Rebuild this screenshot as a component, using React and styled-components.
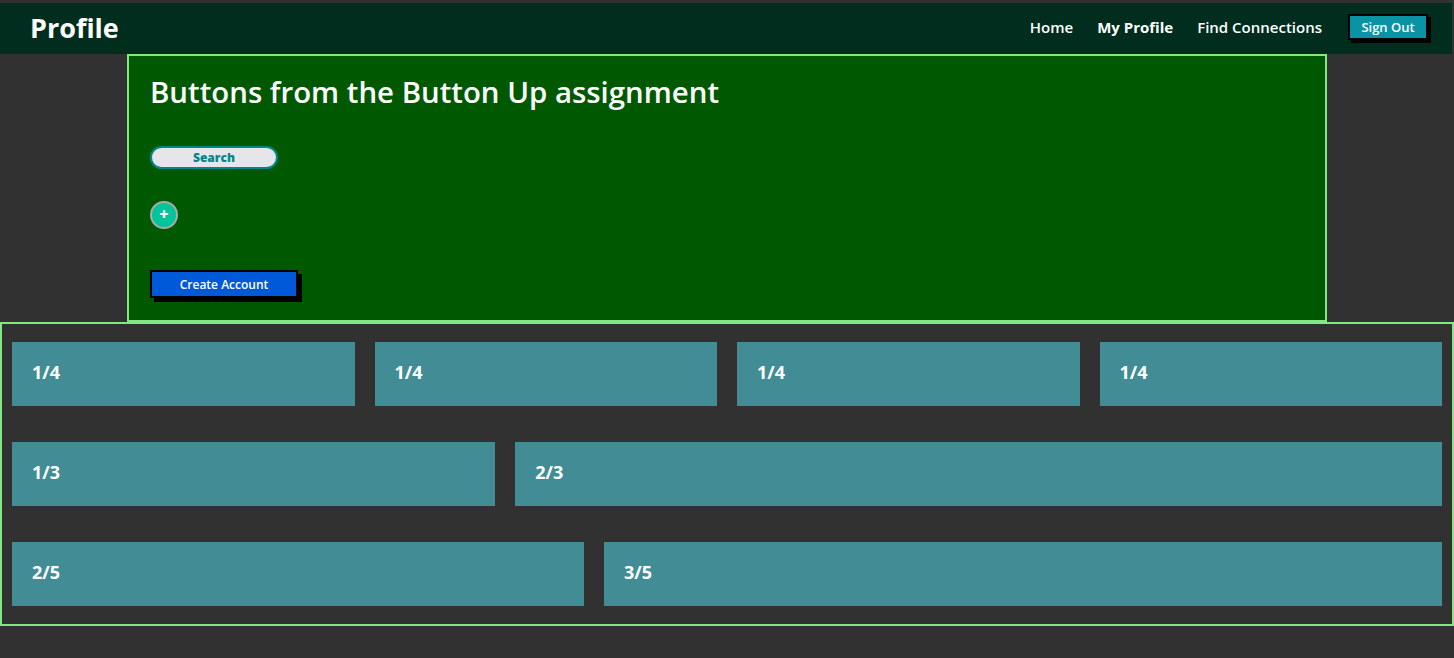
import styled, { createGlobalStyle } from "styled-components";

const GlobalStyle = createGlobalStyle`
  * { box-sizing: border-box; }
  body {
    margin: 0;
    background: #313131;
    font-family: "Open Sans", "Noto Sans", sans-serif;
    color: #fff;
  }
`;

const Page = styled.div`
  padding-top: 3px;
  min-height: 658px;
`;

const Nav = styled.nav`
  height: 51px;
  width: 1452px;
  background: #002d1e;
  display: flex;
  align-items: center;
  padding: 0 24px 0 30px;
`;

const Brand = styled.h1`
  margin: 0 0 2px;
  font-size: 27px;
  font-weight: 700;
  flex: 1;
`;

const NavLinks = styled.div`
  display: flex;
  align-items: center;
  gap: 24px;
`;

const NavLink = styled.a`
  font-size: 15px;
  font-weight: ${(p) => (p.$active ? 700 : 600)};
  color: #fff;
  text-decoration: none;
  margin-bottom: 3px;
`;

const SignOut = styled.button`
  font-family: inherit;
  font-size: 13px;
  font-weight: 600;
  color: #fff;
  background: #0a93a5;
  border: 2px solid #000;
  box-shadow: 3px 3px 0 #000;
  width: 80px;
  height: 26px;
  margin: 0 0 3px 2px;
`;

const Panel = styled.section`
  width: 1200px;
  height: 268px;
  margin: 0 auto;
  background: #005900;
  border: 2px solid #83e883;
  padding: 18px 20px 0 21px;
  display: flex;
  flex-direction: column;
  align-items: flex-start;
`;

const Heading = styled.h2`
  margin: 0;
  font-size: 29.4px;
  line-height: 36px;
  font-weight: 600;
`;

const SearchButton = styled.button`
  margin-top: 36px;
  width: 128px;
  height: 23px;
  border-radius: 12px;
  background: #e6e6ea;
  border: 2px solid #00868b;
  color: #00868b;
  font-family: inherit;
  font-size: 12px;
  font-weight: 800;
`;

const AddButton = styled.button`
  margin-top: 32px;
  width: 28px;
  height: 28px;
  border-radius: 50%;
  background: #00c59c;
  border: 2px solid #a8a8a8;
  color: #fff;
  font-family: inherit;
  font-size: 16px;
  font-weight: 800;
  line-height: 1;
  padding: 0 0 2px;
  display: flex;
  align-items: center;
  justify-content: center;
`;

const CreateButton = styled.button`
  margin-top: 41px;
  width: 148px;
  height: 28px;
  background: #0059d9;
  border: 2px solid #000;
  box-shadow: 4px 4px 0 #000;
  color: #fff;
  font-family: inherit;
  font-size: 12px;
  font-weight: 600;
`;

const Grid = styled.section`
  width: 1454px;
  border: 2px solid #83e883;
  padding: 18px 10px;
  display: flex;
  flex-direction: column;
  gap: 36px;
`;

const Row = styled.div`
  display: flex;
  gap: 20px;
`;

const Cell = styled.div`
  flex: ${(p) => p.$grow} 1 0;
  height: 64px;
  padding: 0 20px 4px;
  background: #428d95;
  display: flex;
  align-items: center;
  font-size: 18px;
  font-weight: 700;
`;

const rows = [
  [["1/4", 1], ["1/4", 1], ["1/4", 1], ["1/4", 1]],
  [["1/3", 1], ["2/3", 2]],
  [["2/5", 2], ["3/5", 3]],
];

export default function App() {
  return (
    <Page>
      <GlobalStyle />
      <Nav>
        <Brand>Profile</Brand>
        <NavLinks>
          <NavLink href="#">Home</NavLink>
          <NavLink href="#" $active>My Profile</NavLink>
          <NavLink href="#">Find Connections</NavLink>
          <SignOut>Sign Out</SignOut>
        </NavLinks>
      </Nav>
      <Panel>
        <Heading>Buttons from the Button Up assignment</Heading>
        <SearchButton>Search</SearchButton>
        <AddButton>+</AddButton>
        <CreateButton>Create Account</CreateButton>
      </Panel>
      <Grid>
        {rows.map((row, i) => (
          <Row key={i}>
            {row.map(([label, grow], j) => (
              <Cell key={j} $grow={grow}>
                {label}
              </Cell>
            ))}
          </Row>
        ))}
      </Grid>
    </Page>
  );
}
